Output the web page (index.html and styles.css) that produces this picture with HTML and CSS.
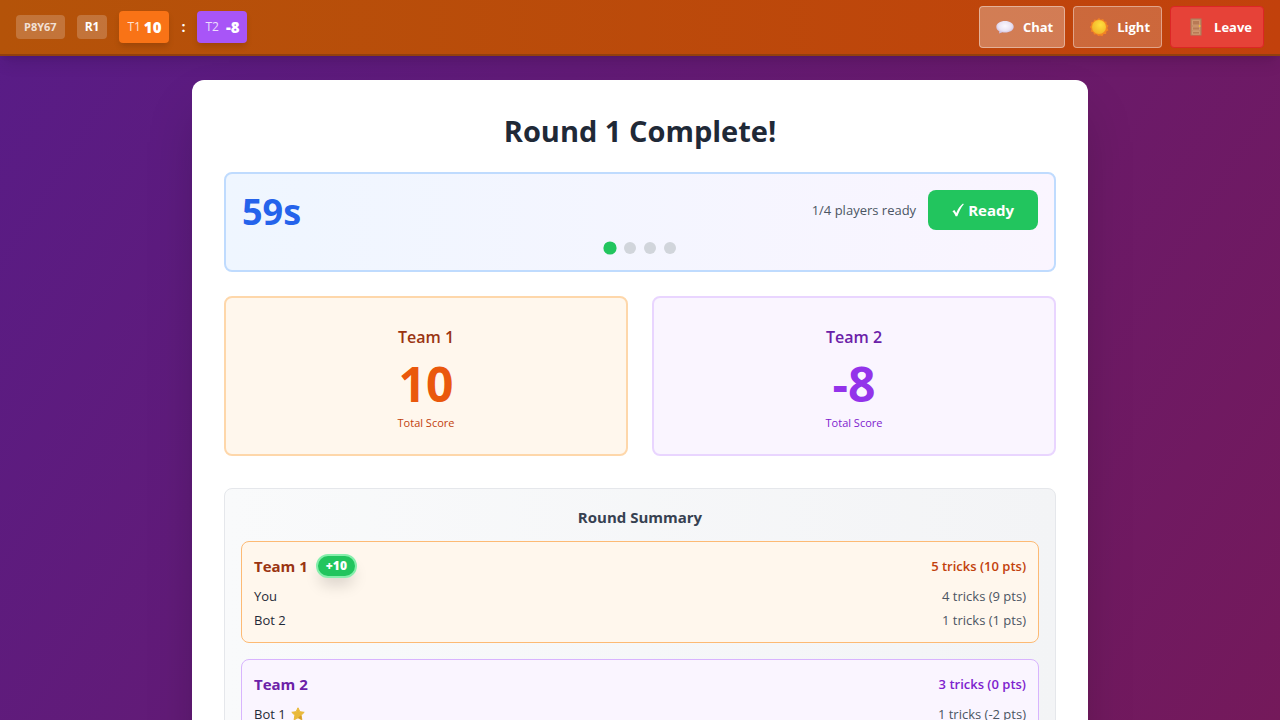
FILE: index.html
```html
<!DOCTYPE html>
<html lang="en">
<head>
<meta charset="utf-8">
<meta name="viewport" content="width=device-width, initial-scale=1">
<title>Round 1 Complete</title>
<link rel="stylesheet" href="styles.css">
</head>
<body>
<header class="topbar">
  <div class="status">
    <span class="chip chip-code">P8Y67</span>
    <span class="chip chip-round">R1</span>
    <div class="score score-one"><span class="score-name">T1</span><span class="score-value">10</span></div>
    <span class="colon">:</span>
    <div class="score score-two"><span class="score-name">T2</span><span class="score-value">-8</span></div>
  </div>
  <div class="actions">
    <button class="action action-chat" type="button">
      <svg class="icon" viewBox="0 0 20 20" aria-hidden="true">
        <defs><radialGradient id="bubble" cx=".5" cy=".4" r=".6"><stop offset="0" stop-color="#fbf8fd"/><stop offset=".6" stop-color="#ebe4f3"/><stop offset="1" stop-color="#c9b9dd"/></radialGradient></defs>
        <path d="M10 4C5 4 1.300 6.500 1.300 9.800c0 2 1.200 3.500 3 4.500L4 16.600l3.400-1.300c.8.200 1.700.3 2.600.3 5 0 8.700-2.500 8.700-5.800S15 4 10 4z" fill="url(#bubble)"/>
      </svg>
      <span>Chat</span>
    </button>
    <button class="action action-light" type="button">
      <svg class="icon" viewBox="0 0 20 20" aria-hidden="true">
        <defs><radialGradient id="sun" cx=".6" cy=".35" r=".65"><stop offset="0" stop-color="#ffdf3d"/><stop offset="1" stop-color="#f2b52a"/></radialGradient></defs>
        <path d="M10 1l1.800 1.700L14.200 2l.9 2.300 2.500.4-.1 2.500 2 1.600-1.200 2.200 1.200 2.200-2.200 1.200-.2 2.500-2.500.2-1.200 2.200-2.200-.9L9.200 19l-1.700-1.800-2.500.4-.7-2.400-2.400-.8.500-2.500L.9 10l1.500-1.900-.4-2.500 2.400-.8L5.300 2.500l2.500.4z" fill="#f28424"/>
        <circle cx="10" cy="10" r="7" fill="url(#sun)"/>
      </svg>
      <span>Light</span>
    </button>
    <button class="action action-leave" type="button">
      <svg class="icon" viewBox="0 0 20 20" aria-hidden="true">
        <path d="M4.500 1.500h11v17h-11z" fill="#a9805f"/>
        <path d="M5.500 2.500h9v15.500h-9z" fill="#c58b63"/>
        <path d="M6.500 3.500h7v4.500h-7zM6.500 10h7v3h-7zM6.500 14.500h7v2.500h-7z" fill="#b87a55" stroke="#d7a179" stroke-width=".7"/>
        <circle cx="13.700" cy="9" r=".9" fill="#f5bd3c"/>
      </svg>
      <span>Leave</span>
    </button>
  </div>
</header>

<main class="page">
  <section class="card">
    <h1 class="title">Round 1 Complete!</h1>

    <div class="countdown">
      <div class="countdown-row">
        <div class="timer">59s</div>
        <div class="ready">
          <span class="ready-count">1/4 players ready</span>
          <button class="ready-button" type="button">
            <svg class="check" viewBox="0 0 12 14" aria-hidden="true"><path d="M.4 8.300l2-1.200 1.900 3C6 6 8 3 11 .6l.8.6C9 4.500 7 8.500 5.300 13.300H3.600C2.800 11.200 1.800 9.600.4 8.300z" fill="currentColor"/></svg>
            <span>Ready</span>
          </button>
        </div>
      </div>
      <div class="dots">
        <span class="dot dot-on"></span><span class="dot"></span><span class="dot"></span><span class="dot"></span>
      </div>
    </div>

    <div class="totals">
      <div class="total team-one">
        <h2 class="total-name">Team 1</h2>
        <div class="total-value">10</div>
        <div class="total-label">Total Score</div>
      </div>
      <div class="total team-two">
        <h2 class="total-name">Team 2</h2>
        <div class="total-value">-8</div>
        <div class="total-label">Total Score</div>
      </div>
    </div>

    <section class="summary">
      <h2 class="summary-title">Round Summary</h2>
      <div class="teams">
        <div class="team team-one">
          <div class="team-head">
            <div class="team-label"><h3 class="team-name">Team 1</h3><span class="gain">+10</span></div>
            <span class="team-tricks">5 tricks (10 pts)</span>
          </div>
          <div class="players">
            <div class="player"><span>You</span><span class="tricks">4 tricks (9 pts)</span></div>
            <div class="player"><span>Bot 2</span><span class="tricks">1 tricks (1 pts)</span></div>
          </div>
        </div>
        <div class="team team-two">
          <div class="team-head">
            <div class="team-label"><h3 class="team-name">Team 2</h3></div>
            <span class="team-tricks">3 tricks (0 pts)</span>
          </div>
          <div class="players">
            <div class="player">
              <span class="player-name">Bot 1
                <svg class="star" viewBox="0 0 14 14" aria-hidden="true"><path d="M7 .8l1.900 3.900 4.300.6-3.100 3 .8 4.500L7 10.800l-3.900 2 .8-4.500-3.100-3 4.300-.6z" fill="#e9b93a" stroke="#e9b93a" stroke-width="1" stroke-linejoin="round"/><path d="M7 10.800l3.900 2-.8-4.500z" fill="#d39a2c"/></svg>
              </span>
              <span class="tricks">1 tricks (-2 pts)</span>
            </div>
          </div>
        </div>
      </div>
    </section>
  </section>
</main>
</body>
</html>
```

FILE: styles.css
```css
* { box-sizing: border-box; margin: 0; }

body {
  min-height: 100vh;
  font-family: "Open Sans", "Noto Sans", sans-serif;
  font-size: 14px;
  line-height: 20px;
  color: #1f2937;
  background: linear-gradient(122deg, #581c87, #751959);
}

button { font: inherit; border: 0; cursor: pointer; }

/* Top bar */
.topbar {
  position: relative;
  display: flex;
  justify-content: space-between;
  align-items: center;
  padding: 6px 16px;
  border-bottom: 2px solid #92400e;
  background: linear-gradient(to right, #b45309, #c2410c);
  box-shadow: 0 10px 15px -3px rgba(0, 0, 0, .1), 0 4px 6px -4px rgba(0, 0, 0, .1);
  color: #fff;
}
.status { display: flex; align-items: center; gap: 12px; }
.actions { display: flex; gap: 8px; }
.chip {
  padding: 4px 8px;
  border-radius: 4px;
  background: rgba(255, 255, 255, .2);
  font-size: 12px;
  line-height: 16px;
  font-weight: 700;
}
.chip-code { font-size: 11px; color: rgba(255, 255, 255, .8); }
.score {
  display: flex;
  align-items: center;
  justify-content: space-between;
  min-width: 50px;
  padding: 4px 8px;
  border-radius: 4px;
  line-height: 24px;
  box-shadow: 0 4px 6px -1px rgba(0, 0, 0, .15);
}
.score-one { background: #f97316; }
.score-two { background: #a855f7; }
.score-name { font-size: 12px; opacity: .8; }
.score-value { font-size: 15px; font-weight: 800; }
.colon { font-weight: 700; }
.action {
  display: flex;
  align-items: center;
  gap: 8px;
  height: 42px;
  padding: 0 11px 0 15px;
  border: 1px solid rgba(255, 255, 255, .4);
  border-radius: 4px;
  color: #fff;
  font-size: 13px;
  font-weight: 700;
}
.action-chat { background: rgba(255, 255, 255, .3); }
.action-light { background: rgba(255, 255, 255, .2); }
.action-leave { background: #e64238; border-color: #dc2626; }
.icon { width: 20px; height: 20px; }

/* Results card */
.page { padding: 24px; }
.card {
  max-width: 896px;
  margin: 0 auto;
  padding: 32px;
  border-radius: 12px;
  background: #fff;
  box-shadow: 0 25px 50px -12px rgba(0, 0, 0, .25);
}
.title {
  margin-bottom: 22px;
  font-size: 29px;
  line-height: 38px;
  font-weight: 700;
  text-align: center;
}
.countdown {
  margin-bottom: 24px;
  padding: 16px;
  border: 2px solid #bfdbfe;
  border-radius: 8px;
  background: linear-gradient(to right, #eff6ff, #faf5ff);
}
.countdown-row { display: flex; justify-content: space-between; align-items: center; margin-bottom: 12px; }
.timer { padding-top: 4px; font-size: 36px; line-height: 36px; font-weight: 700; color: #2563eb; }
.ready { display: flex; align-items: center; gap: 12px; }
.ready-count { font-size: 13px; color: #4b5563; }
.ready-button {
  display: flex;
  align-items: center;
  gap: 4px;
  padding: 8px 24px;
  border-radius: 8px;
  background: #22c55e;
  color: #fff;
  font-size: 15px;
  line-height: 24px;
  font-weight: 700;
}
.check { width: 12px; height: 14px; }
.dots { display: flex; justify-content: center; gap: 8px; }
.dot { width: 12px; height: 12px; border-radius: 50%; background: #d1d5db; }
.dot-on { background: #22c55e; transform: scale(1.1); }

/* Team colours */
.team-one { --ink: #9a3412; --accent: #c2410c; --value: #ea580c; --line: #fed7aa; --edge: #fdba74; background: #fff7ed; }
.team-two { --ink: #6b21a8; --accent: #7e22ce; --value: #9333ea; --line: #e9d5ff; --edge: #d8b4fe; background: #faf5ff; }

.totals { display: grid; grid-template-columns: 1fr 1fr; gap: 24px; margin-bottom: 32px; }
.total { padding: 24px; border: 2px solid var(--line); border-radius: 8px; text-align: center; }
.total-name { margin-bottom: 6px; font-size: 16px; line-height: 30px; font-weight: 600; color: var(--ink); }
.total-value { margin-bottom: 4px; font-size: 48px; line-height: 52px; font-weight: 700; color: var(--value); }
.total-label { padding-top: 2px; font-size: 11px; line-height: 14px; color: var(--accent); }

/* Round summary */
.summary {
  padding: 16px;
  border: 1px solid #e5e7eb;
  border-radius: 8px;
  background: linear-gradient(to right, #f9fafb, #f3f4f6);
}
.summary-title { margin-bottom: 12px; font-size: 15px; line-height: 24px; font-weight: 700; text-align: center; color: #374151; }
.teams { display: grid; gap: 16px; }
.team { padding: 12px; border: 1px solid var(--edge); border-radius: 8px; }
.team-head { display: flex; justify-content: space-between; align-items: center; margin-bottom: 8px; }
.team-label { display: flex; align-items: center; gap: 8px; }
.team-name { font-size: 15px; line-height: 24px; font-weight: 700; color: var(--ink); }
.team-tricks { font-size: 13px; font-weight: 600; color: var(--accent); }
.gain {
  padding: 2px 8px;
  border: 2px solid #86efac;
  border-radius: 12px;
  background: #22c55e;
  color: #fff;
  font-size: 12px;
  line-height: 16px;
  font-weight: 800;
  box-shadow: 0 10px 15px -3px rgba(0, 0, 0, .15);
}
.players { display: grid; gap: 4px; font-size: 13px; }
.player { display: flex; justify-content: space-between; align-items: center; }
.player-name { display: flex; align-items: center; gap: 5px; }
.star { width: 14px; height: 14px; }
.tricks { color: #4b5563; }
```
